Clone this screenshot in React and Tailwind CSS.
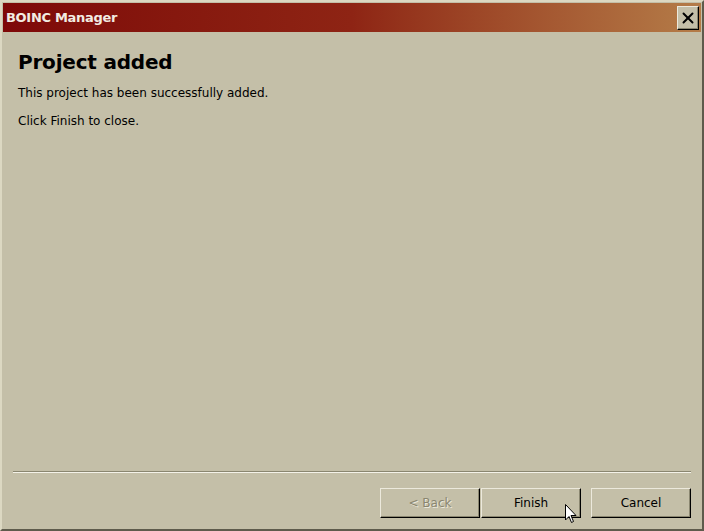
import { X } from "lucide-react";

const Button = ({ children, disabled, className = "" }) => (
  <button
    type="button"
    disabled={disabled}
    className={`h-[30px] w-[100px] border-t border-l border-t-[#ece9dc] border-l-[#ece9dc] border-r border-b border-r-black border-b-black bg-[#c4bfa8] text-[12px] shadow-[inset_-1px_-1px_0_#8a8670] ${
      disabled ? "text-[#8a8670] [text-shadow:1px_1px_0_#ece9dc]" : "text-black"
    } ${className}`}
  >
    {children}
  </button>
);

const Cursor = () => (
  <svg
    className="absolute left-[563px] top-[502px]"
    width="12"
    height="20"
    viewBox="0 0 12 20"
  >
    <path
      d="M0.5 0.5 L0.5 16 L4 12.5 L6.5 18.5 L8.5 17.5 L6 11.5 L11 11.5 Z"
      fill="white"
      stroke="black"
      strokeWidth="1"
    />
  </svg>
);

export default function App() {
  return (
    <div
      className="relative w-[704px] h-[531px] overflow-hidden bg-[#c4bfa8] border-t-2 border-l-2 border-t-[#dcd8c2] border-l-[#dcd8c2] border-r-2 border-b-2 border-r-[#5e5b4c] border-b-[#5e5b4c] flex flex-col"
      style={{ fontFamily: '"DejaVu Sans", Tahoma, sans-serif' }}
    >
      {/* title bar */}
      <div className="mx-[1px] mt-[1px] h-[29px] flex items-center justify-between bg-gradient-to-r from-[#7e0808] via-[#8e2414] to-[#b47c48] pl-[3px] pr-[2px]">
        <span className="text-[13px] font-bold text-[#f2ece2] tracking-[-0.3px]">
          BOINC Manager
        </span>
        <div className="w-[22px] h-[24px] bg-[#c4bfa8] border-t border-l border-t-[#ece9dc] border-l-[#ece9dc] border-r border-b border-r-black border-b-black shadow-[inset_-1px_-1px_0_#8a8670] flex items-center justify-center">
          <X size={18} strokeWidth={2.6} color="black" />
        </div>
      </div>

      {/* content */}
      <div className="flex-1 px-[16px] pt-[17px]">
        <h1 className="text-[20px] font-bold text-black leading-[26px] tracking-[-0.2px]">
          Project added
        </h1>
        <p className="mt-[11px] text-[12px] text-black leading-[14px]">
          This project has been successfully added.
        </p>
        <p className="mt-[14px] text-[12px] text-black leading-[14px]">
          Click Finish to close.
        </p>
      </div>

      {/* separator */}
      <div className="mx-[11px] h-[2px] border-t border-t-[#8a8670] border-b border-b-[#f4f2e8]" />

      {/* buttons */}
      <div className="flex justify-end pr-[11px] pt-[15px] pb-[11px]">
        <Button disabled>&lt; Back</Button>
        <Button className="ml-[1px]">Finish</Button>
        <Button className="ml-[10px]">Cancel</Button>
      </div>

      <Cursor />
    </div>
  );
}
